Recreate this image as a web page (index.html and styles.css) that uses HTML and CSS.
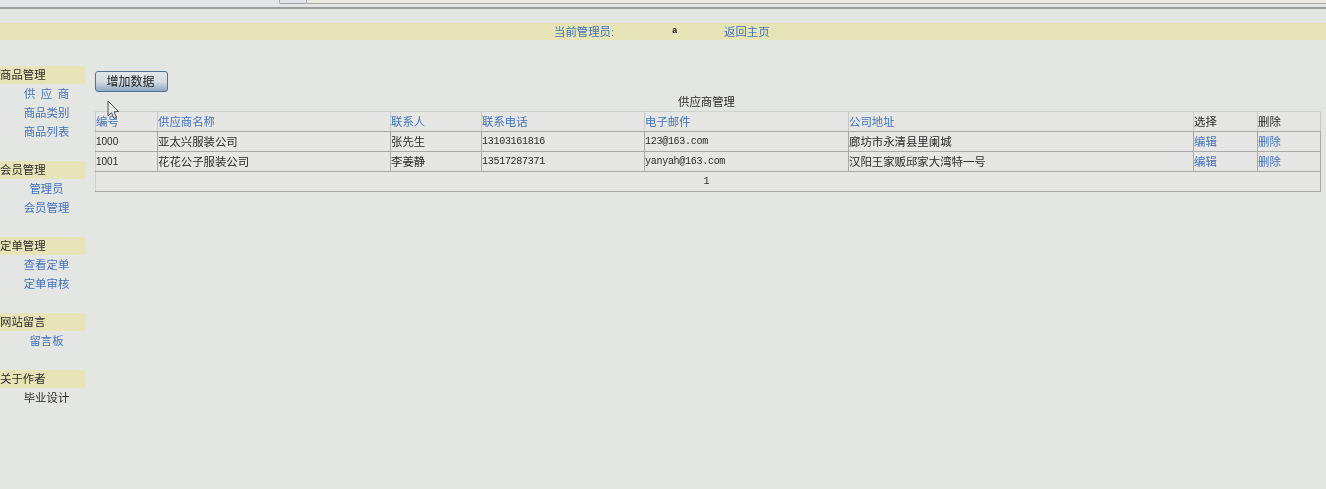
FILE: index.html
```html
<!DOCTYPE html>
<html lang="zh-CN">
<head>
    <meta charset="UTF-8">
    <title>供应商管理</title>
    <link rel="stylesheet" href="styles.css">
</head>
<body>
    <div class="page">
    <div class="chrome">
        <div class="chrome-left"></div>
        <div class="chrome-tab"></div>
        <div class="chrome-right"></div>
    </div>
    <div class="banner">
        <span class="banner-label">当前管理员:</span>
        <span class="banner-user">a</span>
        <a class="banner-link" href="#">返回主页</a>
    </div>
    <div class="layout">
        <div class="sidebar">
            <div class="group">
                <div class="group-head">商品管理</div>
                <a class="group-item spaced" href="#">供 应 商</a>
                <a class="group-item" href="#">商品类别</a>
                <a class="group-item" href="#">商品列表</a>
            </div>
            <div class="group">
                <div class="group-head">会员管理</div>
                <a class="group-item" href="#">管理员</a>
                <a class="group-item" href="#">会员管理</a>
            </div>
            <div class="group">
                <div class="group-head">定单管理</div>
                <a class="group-item" href="#">查看定单</a>
                <a class="group-item" href="#">定单审核</a>
            </div>
            <div class="group">
                <div class="group-head">网站留言</div>
                <a class="group-item" href="#">留言板</a>
            </div>
            <div class="group">
                <div class="group-head">关于作者</div>
                <div class="group-item plain">毕业设计</div>
            </div>
        </div>
        <div class="main">
            <button class="add-btn">增加数据</button>
            <div class="caption">供应商管理</div>
            <table class="data-table">
                <colgroup>
                    <col class="c-id"><col class="c-name"><col class="c-contact"><col class="c-phone">
                    <col class="c-mail"><col class="c-addr"><col class="c-op"><col class="c-del">
                </colgroup>
                <tr class="head-row">
                    <td><a href="#">编号</a></td>
                    <td><a href="#">供应商名称</a></td>
                    <td><a href="#">联系人</a></td>
                    <td><a href="#">联系电话</a></td>
                    <td><a href="#">电子邮件</a></td>
                    <td><a href="#">公司地址</a></td>
                    <td>选择</td>
                    <td>删除</td>
                </tr>
                <tr>
                    <td class="num">1000</td>
                    <td>亚太兴服装公司</td>
                    <td>张先生</td>
                    <td class="mono">13103161816</td>
                    <td class="mono">123@163.com</td>
                    <td>廊坊市永清县里阑城</td>
                    <td><a href="#">编辑</a></td>
                    <td><a href="#">删除</a></td>
                </tr>
                <tr>
                    <td class="num">1001</td>
                    <td>花花公子服装公司</td>
                    <td>李姜静</td>
                    <td class="mono">13517287371</td>
                    <td class="mono">yanyah@163.com</td>
                    <td>汉阳王家贩邱家大湾特一号</td>
                    <td><a href="#">编辑</a></td>
                    <td><a href="#">删除</a></td>
                </tr>
                <tr>
                    <td class="pager" colspan="8">1</td>
                </tr>
            </table>
        </div>
    </div>
    <svg class="cursor" width="13" height="20" viewBox="0 0 13 20">
        <path d="M1 1 L1 16 L4.5 12.8 L7 18.5 L9.5 17.4 L7 11.8 L11.5 11.5 Z" fill="#e8e9e7" stroke="#4a4d50" stroke-width="1"/>
    </svg>
    </div>
</body>
</html>
```

FILE: styles.css
```css
body {
    margin: 0;
    height: 489px;
    overflow: hidden;
    background-color: #e4e6e3;
    font-family: "Liberation Sans", "Noto Sans CJK SC", sans-serif;
    font-size: 11.4px;
    color: #2a2a2a;
}
a {
    color: #4272ba;
    text-decoration: none;
}
.page {
    filter: blur(0.5px);
}

.chrome {
    display: flex;
    height: 7px;
    border-bottom: 2px solid #9a9d9c;
}
.chrome-left {
    width: 279px;
    background: #e0e5e8;
}
.chrome-tab {
    width: 26px;
    height: 3px;
    border: 1px solid #a1a6aa;
    border-top: 0;
    border-radius: 0 0 2px 2px;
    background: #e2e5e6;
}
.chrome-right {
    flex: 1;
    height: 3px;
    background: #e9e9e2;
    border-bottom: 1px solid #a9acae;
}

.banner {
    display: flex;
    align-items: center;
    height: 17px;
    margin-top: 14px;
    padding-left: 554px;
    padding-bottom: 1px;
    box-sizing: border-box;
    background: #e7e4b8;
}
.banner-label {
    color: #4272ba;
    width: 118px;
}
.banner-user {
    width: 52px;
    font-family: "Liberation Mono", monospace;
    font-size: 9px;
    font-weight: bold;
    color: #111;
}

.layout {
    display: flex;
    gap: 2px;
    margin-top: 26px;
}
.sidebar {
    width: 93px;
    flex: none;
}
.group {
    margin-bottom: 20px;
}
.group-head {
    width: 85px;
    height: 18px;
    line-height: 18px;
    background: #e7e4b8;
}
.group-item {
    display: block;
    height: 18px;
    padding-top: 1px;
    line-height: 19px;
    text-align: center;
}
.spaced {
    word-spacing: 2.3px;
}
.plain {
    color: #2a2a2a;
}

.main {
    flex: 1;
    margin-right: 5px;
    padding-top: 5px;
}
.add-btn {
    display: block;
    width: 73px;
    height: 21px;
    padding: 0 2px 5px 0;
    font-family: inherit;
    font-size: 12px;
    color: #1a1a1a;
    background: linear-gradient(#e2e6e8, #d4dde3 50%, #8ea8c3);
    border: 1px solid #50718f;
    border-radius: 3px;
}
.caption {
    height: 19px;
    padding-right: 3px;
    line-height: 21px;
    text-align: center;
}

.data-table {
    width: 1225px;
    table-layout: fixed;
    border-collapse: collapse;
    background: #e6e7e4;
}
.data-table td {
    box-sizing: border-box;
    height: 20px;
    padding: 0 0 2px 0;
    border: 1px solid #a8aaa8;
    white-space: nowrap;
    overflow: hidden;
}
.data-table td:first-child {
    border-left-color: #d0d2d0;
}
.data-table .head-row td {
    border-top-color: #d0d2d0;
    border-left-color: #c6c8c6;
    border-right-color: #c6c8c6;
}
.c-id { width: 62px; }
.c-name { width: 233px; }
.c-contact { width: 91px; }
.c-phone { width: 163px; }
.c-mail { width: 204px; }
.c-addr { width: 345px; }
.c-op { width: 64px; }
.c-del { width: 63px; }

.data-table .num {
    font-size: 10px;
    padding-bottom: 1px;
}
.data-table .mono {
    font-family: "Liberation Mono", monospace;
    font-size: 10px;
    letter-spacing: -0.28px;
    padding-bottom: 1px;
}
.data-table .pager {
    padding: 0 3px 0 0;
    text-align: center;
    font-family: "Liberation Mono", monospace;
    font-size: 10px;
}

.cursor {
    position: absolute;
    left: 107px;
    top: 100px;
}
```
